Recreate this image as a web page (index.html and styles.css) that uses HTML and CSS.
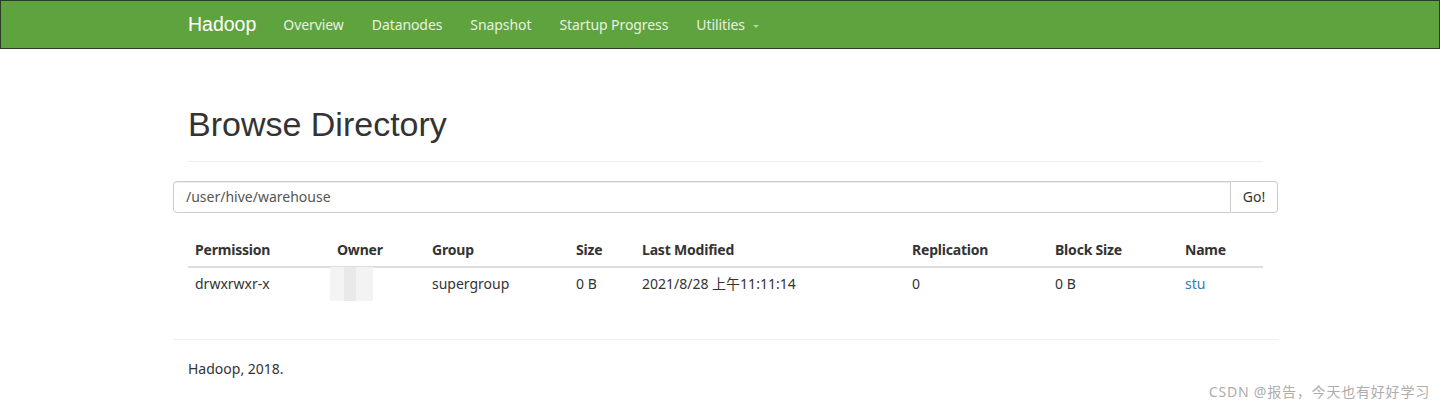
FILE: index.html
```html
<!DOCTYPE html>
<html>
<head>
<meta charset="utf-8">
<link rel="stylesheet" href="styles.css">
</head>
<body>
<header class="navbar">
  <div class="nav-inner">
    <span class="brand">Hadoop</span>
    <nav class="links">
      <span class="link">Overview</span>
      <span class="link">Datanodes</span>
      <span class="link">Snapshot</span>
      <span class="link">Startup Progress</span>
      <span class="link">Utilities<span class="caret"></span></span>
    </nav>
  </div>
</header>
<main class="container">
  <h1 class="title">Browse Directory</h1>
  <div class="input-group">
    <div class="path-input">/user/hive/warehouse</div>
    <div class="go-btn">Go!</div>
  </div>
  <table class="listing">
    <thead>
      <tr>
        <th class="c-perm">Permission</th>
        <th class="c-owner">Owner</th>
        <th class="c-group">Group</th>
        <th class="c-size">Size</th>
        <th class="c-mod">Last Modified</th>
        <th class="c-rep">Replication</th>
        <th class="c-block">Block Size</th>
        <th class="c-name">Name</th>
      </tr>
    </thead>
    <tbody>
      <tr>
        <td>drwxrwxr-x</td>
        <td class="owner-cell"><span class="blur"></span></td>
        <td>supergroup</td>
        <td>0 B</td>
        <td>2021/8/28 上午11:11:14</td>
        <td>0</td>
        <td>0 B</td>
        <td><span class="name-link">stu</span></td>
      </tr>
    </tbody>
  </table>
  <footer class="footer">Hadoop, 2018.</footer>
</main>
<div class="watermark">CSDN @报告，今天也有好好学习</div>
</body>
</html>
```

FILE: styles.css
```css
* { box-sizing: border-box; }
html, body { margin: 0; padding: 0; background: #fff; }
body {
  font-family: "Noto Sans", "Noto Sans CJK SC", sans-serif;
  font-size: 14px;
  color: #333;
  width: 1440px;
  height: 408px;
  overflow: hidden;
  position: relative;
}
.navbar {
  height: 49px;
  background: #5fa33e;
  border: 1px solid #2b3d22;
}
.nav-inner {
  margin-left: 187px;
  display: flex;
  align-items: center;
  height: 47px;
}
.brand {
  font-family: "Liberation Sans", Arial, sans-serif;
  font-size: 19.5px;
  color: #fff;
  margin-right: 27px;
}
.links { display: flex; align-items: center; gap: 28px; }
.link {
  color: #e8f1e1;
  font-size: 14px;
  letter-spacing: -0.08px;
}
.caret {
  display: inline-block;
  width: 0; height: 0;
  border-left: 3px solid transparent;
  border-right: 3px solid transparent;
  border-top: 3px solid #b7d3a6;
  vertical-align: middle;
  margin-left: 8px;
}
.container {
  margin-left: 173px;
  width: 1105px;
}
.title {
  font-family: "Liberation Sans", Arial, sans-serif;
  font-weight: normal;
  font-size: 34px;
  color: #333;
  margin: 0 15px 0 15px;
  padding: 55px 0 17px 0;
  line-height: 40px;
  border-bottom: 1px solid #eee;
}
.input-group {
  display: flex;
  margin-top: 19px;
  height: 32px;
}
.path-input {
  flex: 1;
  border: 1px solid #ccc;
  border-radius: 4px 0 0 4px;
  padding: 0 12px;
  line-height: 30px;
  color: #555;
  box-shadow: inset 0 1px 1px rgba(0,0,0,.075);
}
.go-btn {
  width: 47px;
  border: 1px solid #ccc;
  border-left: none;
  border-radius: 0 4px 4px 0;
  text-align: center;
  line-height: 30px;
  color: #333;
}
.listing {
  margin: 18px 15px 0 15px;
  width: 1075px;
  border-collapse: collapse;
}
.listing th {
  text-align: left;
  font-weight: bold;
  padding: 9px 7px 7px;
  border-bottom: 2px solid #ddd;
  line-height: 19px;
  letter-spacing: -0.2px;
}
.listing td {
  padding: 6px 7px 7px;
  line-height: 19px;
  height: 32px;
  position: relative;
}
.c-perm { width: 142px; }
.c-owner { width: 95px; }
.c-group { width: 144px; }
.c-size { width: 66px; }
.c-mod { width: 270px; }
.c-rep { width: 143px; }
.c-block { width: 130px; }
.blur {
  position: absolute;
  left: 0;
  top: -1px;
  width: 43px;
  height: 34px;
  background: linear-gradient(90deg, #f4f4f4 0 33%, #e9e9e9 33% 60%, #f3f3f3 60%);
}
.name-link { color: #337ab7; }
.footer {
  margin-top: 39px;
  border-top: 1px solid #eee;
  padding: 19px 15px 18px;
  line-height: 20px;
}
.watermark {
  position: absolute;
  right: 10px;
  bottom: 7px;
  font-size: 14px;
  letter-spacing: 0.8px;
  color: #adadad;
}
```
